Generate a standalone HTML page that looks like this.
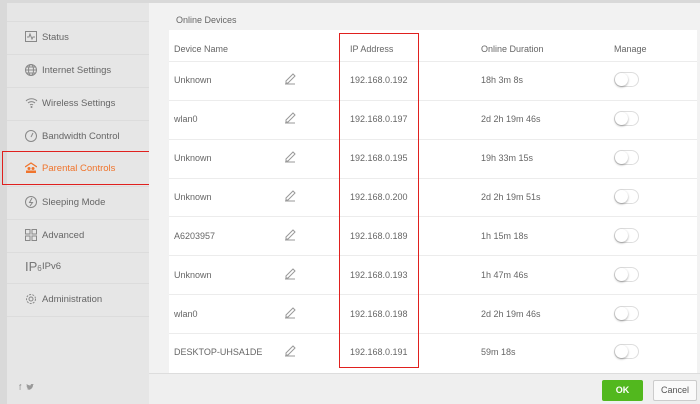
<!DOCTYPE html>
<html><head><style>
*{margin:0;padding:0;box-sizing:border-box}
body{width:700px;height:404px;background:#d9d9d9;font-family:"Liberation Sans",sans-serif;position:relative;overflow:hidden;color:#555}
.side{position:absolute;left:7px;top:3px;width:142px;height:401px;background:#e6e6e6}
.item{position:absolute;left:7px;width:142px;height:33px;border-top:1px solid #dcdcdc;font-size:9.5px;color:#666;line-height:32px;padding-left:35px}
.item svg{position:absolute;left:18px;top:9px}
.main{position:absolute;left:149px;top:3px;width:551px;height:370px;background:#f2f2f2}
.tbl{position:absolute;left:169px;top:30px;width:528px;height:343px;background:#fff}
.t{position:absolute;font-size:9px;color:#666;white-space:nowrap}
.line{position:absolute;left:169px;width:528px;height:1px;background:#ececec}
.tog{position:absolute;left:614px;width:25px;height:15px;border:1px solid #ddd;border-radius:8px;background:#fff}
.tog:before{content:"";position:absolute;left:0;top:0;width:13px;height:13px;border-radius:50%;box-shadow:0 1px 2px rgba(0,0,0,.35);background:#fff}
.foot{position:absolute;left:149px;top:373px;width:551px;height:31px;background:#efefef;border-top:1px solid #ddd}
</style></head><body>
<div class="side"></div>
<div class="item" style="top:21px"><svg width="12" height="11"><rect x=".5" y=".5" width="11" height="10" fill="none" stroke="#888"/><path d="M2 6h2l1-3 2 5 1-2h2" fill="none" stroke="#888"/></svg>Status</div>
<div class="item" style="top:54px"><svg width="12" height="12"><circle cx="6" cy="6" r="5.5" fill="none" stroke="#888"/><ellipse cx="6" cy="6" rx="2.5" ry="5.5" fill="none" stroke="#888"/><path d="M.5 6h11M1.5 3h9M1.5 9h9" stroke="#888"/></svg>Internet Settings</div>
<div class="item" style="top:87px"><svg width="13" height="11"><path d="M1 4a8 8 0 0 1 11 0M3 6a5 5 0 0 1 7 0M5 8a2 2 0 0 1 3 0" fill="none" stroke="#888"/><circle cx="6.5" cy="10" r="1" fill="#888"/></svg>Wireless Settings</div>
<div class="item" style="top:120px"><svg width="12" height="12"><circle cx="6" cy="6" r="5.5" fill="none" stroke="#888"/><path d="M6 7l2-4" stroke="#888"/></svg>Bandwidth Control</div>
<div class="item" style="top:153px;color:#f0742c;border-top:none"><svg width="12" height="11"><path d="M0 5L6 1l6 4" fill="none" stroke="#f0742c" stroke-width="1.3"/><circle cx="4" cy="6.5" r="1.5" fill="#f0742c"/><circle cx="8" cy="6.5" r="1.5" fill="#f0742c"/><rect x="1" y="8.5" width="10" height="2.5" fill="#f0742c"/></svg>Parental Controls</div>
<div class="item" style="top:186px"><svg width="12" height="12"><circle cx="6" cy="6" r="5.5" fill="none" stroke="#888"/><path d="M7 2L4.5 6.5h3L5 10" fill="none" stroke="#888"/></svg>Sleeping Mode</div>
<div class="item" style="top:219px"><svg width="12" height="12"><rect x=".5" y=".5" width="4.5" height="4.5" fill="none" stroke="#888"/><rect x="7" y=".5" width="4.5" height="4.5" fill="none" stroke="#888"/><rect x=".5" y="7" width="4.5" height="4.5" fill="none" stroke="#888"/><rect x="7" y="7" width="4.5" height="4.5" fill="none" stroke="#888"/></svg>Advanced</div>
<div class="item" style="top:252px;height:31px;line-height:28px"><span style="position:absolute;left:18px;top:0;font-size:13px;color:#777">IP<span style="font-size:8px">6</span></span>IPv6</div>
<div class="item" style="top:283px"><svg width="12" height="12"><circle cx="6" cy="6" r="4.5" fill="none" stroke="#888" stroke-dasharray="2 1.2"/><circle cx="6" cy="6" r="2" fill="none" stroke="#888"/></svg>Administration</div>
<div class="item" style="top:316px"></div>
<div class="t" style="left:19px;top:383px;font-size:8px;color:#999">f</div>
<svg style="position:absolute;left:26px;top:384px" width="8" height="7"><path d="M0 5c3 2 7 0 7-4l1-1-1 .3C6 -.5 4.5 0 4.5 1.5 3 1.5 1.5 .8 .8 0c-.5 1 0 2 .6 2.3-.3 0-.6 0-.8-.2 0 1 .6 1.6 1.3 1.8-.3.1-.6.1-.8 0 .2.7.9 1.1 1.6 1.1C2 5.5 1 5.7 0 5z" fill="#999"/></svg>
<div style="position:absolute;left:2px;top:151px;width:148px;height:34px;border:1.5px solid #e0201e"></div>

<div class="main"></div>
<div class="t" style="left:176px;top:15px">Online Devices</div>
<div class="tbl"></div>
<div class="t" style="left:174px;top:44px">Device Name</div>
<div class="t" style="left:350px;top:44px">IP Address</div>
<div class="t" style="left:481px;top:44px">Online Duration</div>
<div class="t" style="left:614px;top:44px">Manage</div>
<div class="line" style="top:61px"></div>
<div class="line" style="top:100px"></div>
<div class="line" style="top:139px"></div>
<div class="line" style="top:178px"></div>
<div class="line" style="top:216px"></div>
<div class="line" style="top:255px"></div>
<div class="line" style="top:294px"></div>
<div class="line" style="top:333px"></div>

<div class="t" style="left:174px;top:75px">Unknown</div><div class="t" style="left:350px;top:75px">192.168.0.192</div><div class="t" style="left:481px;top:75px">18h 3m 8s</div><div class="tog" style="top:72px"></div>
<div class="t" style="left:174px;top:114px">wlan0</div><div class="t" style="left:350px;top:114px">192.168.0.197</div><div class="t" style="left:481px;top:114px">2d 2h 19m 46s</div><div class="tog" style="top:111px"></div>
<div class="t" style="left:174px;top:153px">Unknown</div><div class="t" style="left:350px;top:153px">192.168.0.195</div><div class="t" style="left:481px;top:153px">19h 33m 15s</div><div class="tog" style="top:150px"></div>
<div class="t" style="left:174px;top:192px">Unknown</div><div class="t" style="left:350px;top:192px">192.168.0.200</div><div class="t" style="left:481px;top:192px">2d 2h 19m 51s</div><div class="tog" style="top:189px"></div>
<div class="t" style="left:174px;top:231px">A6203957</div><div class="t" style="left:350px;top:231px">192.168.0.189</div><div class="t" style="left:481px;top:231px">1h 15m 18s</div><div class="tog" style="top:228px"></div>
<div class="t" style="left:174px;top:270px">Unknown</div><div class="t" style="left:350px;top:270px">192.168.0.193</div><div class="t" style="left:481px;top:270px">1h 47m 46s</div><div class="tog" style="top:267px"></div>
<div class="t" style="left:174px;top:309px">wlan0</div><div class="t" style="left:350px;top:309px">192.168.0.198</div><div class="t" style="left:481px;top:309px">2d 2h 19m 46s</div><div class="tog" style="top:306px"></div>
<div class="t" style="left:174px;top:347px">DESKTOP-UHSA1DE</div><div class="t" style="left:350px;top:347px">192.168.0.191</div><div class="t" style="left:481px;top:347px">59m 18s</div><div class="tog" style="top:344px"></div>

<svg style="position:absolute;left:284px;top:0" width="12" height="360">
<g fill="none" stroke="#999" stroke-width="1">
<path d="M2 85l7-7 2 2-7 7-2 0zM1 88h10" transform="translate(0,-4)"/>
<path d="M2 85l7-7 2 2-7 7-2 0zM1 88h10" transform="translate(0,35)"/>
<path d="M2 85l7-7 2 2-7 7-2 0zM1 88h10" transform="translate(0,74)"/>
<path d="M2 85l7-7 2 2-7 7-2 0zM1 88h10" transform="translate(0,113)"/>
<path d="M2 85l7-7 2 2-7 7-2 0zM1 88h10" transform="translate(0,152)"/>
<path d="M2 85l7-7 2 2-7 7-2 0zM1 88h10" transform="translate(0,191)"/>
<path d="M2 85l7-7 2 2-7 7-2 0zM1 88h10" transform="translate(0,230)"/>
<path d="M2 85l7-7 2 2-7 7-2 0zM1 88h10" transform="translate(0,268)"/>
</g></svg>

<div style="position:absolute;left:339px;top:33px;width:80px;height:335px;border:1.5px solid #e0201e"></div>

<div class="foot"></div>
<div style="position:absolute;left:602px;top:380px;width:41px;height:21px;background:#52b81e;border-radius:2px;color:#fff;font-size:9px;font-weight:bold;text-align:center;line-height:21px">OK</div>
<div style="position:absolute;left:653px;top:380px;width:44px;height:21px;background:#fafafa;border:1px solid #ccc;border-radius:2px;color:#555;font-size:9px;text-align:center;line-height:19px">Cancel</div>
</body></html>
